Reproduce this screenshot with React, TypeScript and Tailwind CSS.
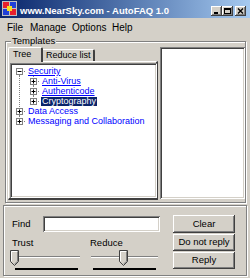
import React from 'react'

type TreeRow = {
  label: string
  level: number
  box: '+' | '-'
  up: boolean
  down: boolean
  guides: boolean[]
  selected?: boolean
  underline?: boolean
}

const rows: TreeRow[] = [
  { label: 'Security', level: 0, box: '-', up: false, down: true, guides: [], underline: true },
  { label: 'Anti-Virus', level: 1, box: '+', up: true, down: true, guides: [true], underline: true },
  { label: 'Authenticode', level: 1, box: '+', up: true, down: true, guides: [true], underline: true },
  { label: 'Cryptography', level: 1, box: '+', up: true, down: false, guides: [true], selected: true },
  { label: 'Data Access', level: 0, box: '+', up: true, down: true, guides: [] },
  { label: 'Messaging and Collaboration', level: 0, box: '+', up: true, down: false, guides: [] },
]

const raised =
  'bg-[#D4D0C8] shadow-[inset_-1px_-1px_#404040,inset_1px_1px_#ffffff,inset_-2px_-2px_#808080,inset_2px_2px_#D4D0C8]'
const sunken =
  'bg-white shadow-[inset_1px_1px_#808080,inset_-1px_-1px_#ffffff,inset_2px_2px_#404040,inset_-2px_-2px_#D4D0C8]'

function Guide({ on }: { on: boolean }) {
  return (
    <svg width="14" height="10" className="shrink-0">
      {on && <line x1="7.5" y1="0" x2="7.5" y2="10" stroke="#808080" strokeDasharray="1 1" />}
    </svg>
  )
}

function Connector({ row }: { row: TreeRow }) {
  return (
    <svg width="14" height="10" className="shrink-0">
      {row.up && <line x1="7.5" y1="0" x2="7.5" y2="5" stroke="#808080" strokeDasharray="1 1" />}
      {row.down && <line x1="7.5" y1="5" x2="7.5" y2="10" stroke="#808080" strokeDasharray="1 1" />}
      <line x1="8" y1="5.5" x2="14" y2="5.5" stroke="#808080" strokeDasharray="1 1" />
      <rect x="4.5" y="2.5" width="6" height="6" fill="#fff" stroke="#808080" />
      <line x1="5.5" y1="5.5" x2="9.5" y2="5.5" stroke="#000" />
      {row.box === '+' && <line x1="7.5" y1="3.5" x2="7.5" y2="7.5" stroke="#000" />}
    </svg>
  )
}

function TitleIcon() {
  return (
    <svg width="15" height="15" viewBox="0 0 15 15" className="shrink-0">
      <rect x="0" y="0" width="15" height="15" fill="#c0c0c0" />
      <rect x="1" y="1" width="6" height="6" fill="#e8202c" />
      <rect x="8" y="1" width="6" height="6" fill="#2040d8" />
      <rect x="1" y="8" width="6" height="6" fill="#2040d8" />
      <rect x="8" y="8" width="6" height="6" fill="#e8202c" />
      <rect x="5" y="5" width="5" height="5" fill="#f8e020" />
    </svg>
  )
}

function CaptionButton({ kind }: { kind: 'min' | 'max' | 'close' }) {
  return (
    <div className={`w-[11px] h-[10px] flex items-center justify-center ${raised}`}>
      <svg width="7" height="6" viewBox="0 0 7 6">
        {kind === 'min' && <rect x="1" y="4" width="4" height="2" fill="#000" />}
        {kind === 'max' && <rect x="0.5" y="0.5" width="6" height="5" fill="none" stroke="#000" strokeWidth="1" />}
        {kind === 'max' && <line x1="0" y1="1.5" x2="7" y2="1.5" stroke="#000" />}
        {kind === 'close' && (
          <path d="M1 0.5 L6 5.5 M6 0.5 L1 5.5" stroke="#000" strokeWidth="1.4" />
        )}
      </svg>
    </div>
  )
}

function Slider({ pos }: { pos: number }) {
  return (
    <div className="relative w-[70px] h-[24px]">
      <div className="absolute left-[3px] right-[0px] top-[8px] h-[2px] border-t border-[#808080] border-b border-b-white" />
      <svg
        width="9"
        height="16"
        viewBox="0 0 9 16"
        className="absolute top-[2px]"
        style={{ left: pos }}
      >
        <path d="M0.5 0.5 H8.5 V11.5 L4.5 15.5 L0.5 11.5 Z" fill="#D4D0C8" stroke="#404040" />
        <path d="M1.5 11 V1.5 H7.5" fill="none" stroke="#fff" />
        <path d="M7.5 1.5 V11.2 L4.5 14.2" fill="none" stroke="#808080" />
      </svg>
      <div className="absolute left-[5px] right-[2px] top-[20px] h-[2px] bg-black" />
    </div>
  )
}

export default function App() {
  return (
    <div className="w-[250px] h-[278px] bg-[#D4D0C8] font-['Liberation_Sans',Arial,sans-serif] text-black overflow-hidden flex flex-col">
      {/* title bar */}
      <div className="h-[18px] flex items-center bg-gradient-to-r from-[#0A246A] to-[#A6CAF0] pl-[2px] pr-[4px]">
        <div className="self-start mt-[1px]">
          <TitleIcon />
        </div>
        <span className="ml-[3px] mt-[4px] text-[9.5px] font-bold text-white leading-none whitespace-nowrap">
          www.NearSky.com - AutoFAQ 1.0
        </span>
        <div className="ml-auto self-end mb-[2px] flex">
          <CaptionButton kind="min" />
          <CaptionButton kind="max" />
          <div className="ml-[2px]">
            <CaptionButton kind="close" />
          </div>
        </div>
      </div>

      {/* menu */}
      <div className="h-[18px] flex items-center text-[10px] pl-[7px]">
        <span className="w-[23px]">File</span>
        <span className="w-[42px]">Manage</span>
        <span className="w-[40px]">Options</span>
        <span>Help</span>
      </div>

      {/* Templates group */}
      <div className="relative ml-[5px] mt-[5px] w-[241px] h-[162px] border border-[#808080] shadow-[inset_1px_1px_#ffffff,1px_1px_#ffffff]">
        <span className="absolute left-[5px] top-[-7px] px-[1px] bg-[#D4D0C8] text-[9.5px] leading-[12px]">
          Templates
        </span>
        <div className="flex pt-[5px] pl-[2px]">
          <div className="w-[150px] flex flex-col">
            <div className="h-[14px] flex items-end text-[9px] leading-none whitespace-nowrap">
              <div className="relative z-10 w-[35px] h-[15px] mb-[-1px] bg-[#D4D0C8] border-l border-t border-white border-r-2 border-r-[#404040] rounded-t-[2px] pl-[4px] pt-[2px]">
                Tree
              </div>
              <div className="w-[52px] h-[12px] border-t border-white border-r-2 border-r-[#404040] rounded-tr-[2px] pl-[3px] pt-[1px]">
                Reduce list
              </div>
            </div>
            <div className="h-[139px] border-l border-t border-white border-r-2 border-b-2 border-r-[#404040] border-b-[#404040] pl-[1px] pt-[1px]">
              <div className={`w-[147px] h-[135px] p-[2px] ${sunken}`}>
                <div className="pt-[1px] text-[9px] leading-[10px]">
                  {rows.map(r => (
                    <div key={r.label} className="flex h-[10px] items-center whitespace-nowrap">
                      {r.guides.map((g, i) => (
                        <Guide key={i} on={g} />
                      ))}
                      <Connector row={r} />
                      <span
                        className={
                          r.selected
                            ? 'ml-[1px] px-[1px] leading-[9px] bg-[#0A246A] text-white'
                            : `ml-[2px] text-[#0000FF] ${r.underline ? 'underline' : ''}`
                        }
                      >
                        {r.label}
                      </span>
                    </div>
                  ))}
                </div>
              </div>
            </div>
          </div>
          <div className={`ml-[2px] w-[85px] h-[152px] ${sunken}`} />
        </div>
      </div>

      {/* bottom panel */}
      <div className="ml-[3px] mt-[2px] w-[244px] h-[71px] border border-[#808080] shadow-[inset_1px_1px_#ffffff,1px_1px_#ffffff] flex text-[9.5px]">
        <div className="w-[160px] pl-[8px] pt-[10px]">
          <div className="flex items-center h-[16px]">
            <span className="w-[31px]">Find</span>
            <div className={`w-[117px] h-[16px] ${sunken}`} />
          </div>
          <div className="flex mt-[5px] h-[11px] leading-[11px]">
            <span className="w-[78px]">Trust</span>
            <span>Reduce</span>
          </div>
          <div className="flex ml-[-2px] gap-[8px]">
            <Slider pos={0} />
            <Slider pos={31} />
          </div>
        </div>
        <div className="ml-[9px] pt-[9px] flex flex-col gap-[1px] text-[9.5px]">
          <div className={`w-[62px] h-[18px] flex items-center justify-center ${raised}`}>Clear</div>
          <div className={`w-[62px] h-[17px] flex items-center justify-center ${raised}`}>Do not reply</div>
          <div className={`w-[62px] h-[17px] flex items-center justify-center ${raised}`}>Reply</div>
        </div>
      </div>
    </div>
  )
}
